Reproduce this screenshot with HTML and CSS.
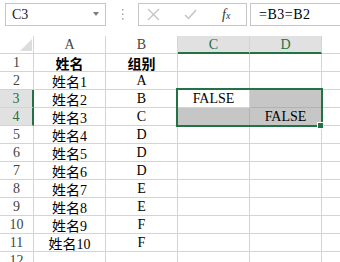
FILE: index.html
```html
<!DOCTYPE html>
<html lang="zh-CN">
<head>
  <meta charset="UTF-8">
  <title>Sheet</title>
  <link rel="stylesheet" href="styles.css">
</head>
<body>
  <div class="formula-bar">
    <div class="name-box"><span>C3</span><span class="caret"></span></div>
    <div class="grip">
      <svg width="3" height="11" viewBox="0 0 3 11"><rect x="1" y="0" width="1.5" height="1.5" fill="#a8a8a8"/><rect x="1" y="4.5" width="1.5" height="1.5" fill="#a8a8a8"/><rect x="1" y="9" width="1.5" height="1.5" fill="#a8a8a8"/></svg>
    </div>
    <div class="fx-tools">
      <svg class="ico-x" width="13" height="13" viewBox="0 0 13 13"><path d="M1 1 L12 12 M12 1 L1 12" stroke="#c4c4c4" stroke-width="1.3" fill="none"/></svg>
      <svg class="ico-ok" width="13" height="11" viewBox="0 0 13 11"><path d="M1 6 L4.5 9.5 L12 1" stroke="#c4c4c4" stroke-width="1.5" fill="none"/></svg>
      <span class="fx">f<small>x</small></span>
    </div>
    <div class="formula">=B3=B2</div>
  </div>

  <div class="sheet">
    <div class="c corner"><span class="tri"></span></div>
    <div class="c h">A</div>
    <div class="c h">B</div>
    <div class="c h sel">C</div>
    <div class="c h sel">D</div>
    <div class="c h"></div>

    <div class="c r">1</div><div class="c b">姓名</div><div class="c b">组别</div><div class="c"></div><div class="c"></div><div class="c"></div>
    <div class="c r">2</div><div class="c">姓名1</div><div class="c">A</div><div class="c"></div><div class="c"></div><div class="c"></div>
    <div class="c r sel">3</div><div class="c">姓名2</div><div class="c">B</div><div class="c">FALSE</div><div class="c fill"></div><div class="c"></div>
    <div class="c r sel">4</div><div class="c">姓名3</div><div class="c">C</div><div class="c fill"></div><div class="c fill">FALSE</div><div class="c"></div>
    <div class="c r">5</div><div class="c">姓名4</div><div class="c">D</div><div class="c"></div><div class="c"></div><div class="c"></div>
    <div class="c r">6</div><div class="c">姓名5</div><div class="c">D</div><div class="c"></div><div class="c"></div><div class="c"></div>
    <div class="c r">7</div><div class="c">姓名6</div><div class="c">D</div><div class="c"></div><div class="c"></div><div class="c"></div>
    <div class="c r">8</div><div class="c">姓名7</div><div class="c">E</div><div class="c"></div><div class="c"></div><div class="c"></div>
    <div class="c r">9</div><div class="c">姓名8</div><div class="c">E</div><div class="c"></div><div class="c"></div><div class="c"></div>
    <div class="c r">10</div><div class="c">姓名9</div><div class="c">F</div><div class="c"></div><div class="c"></div><div class="c"></div>
    <div class="c r">11</div><div class="c">姓名10</div><div class="c">F</div><div class="c"></div><div class="c"></div><div class="c"></div>
    <div class="c r">12</div><div class="c"></div><div class="c"></div><div class="c"></div><div class="c"></div><div class="c"></div>

    <!-- selection C3:D4 -->
    <div class="selection"></div>
    <div class="handle"></div>
  </div>
</body>
</html>
```

FILE: styles.css
```css
body {
  margin: 0;
  width: 340px;
  height: 262px;
  overflow: hidden;
  background: #fff;
  font-family: "Liberation Serif", "Noto Sans CJK SC", serif;
  font-size: 14px;
  color: #000;
}
.formula-bar {
  display: flex;
  height: 23px;
  padding: 3px 0 0 5px;
}
.name-box {
  width: 101px;
  box-sizing: border-box;
  border: 1px solid #c6c6c6;
  display: flex;
  align-items: center;
  justify-content: space-between;
  padding: 0 6px 0 6px;
  color: #222;
}
.caret {
  width: 0;
  height: 0;
  border-left: 3px solid transparent;
  border-right: 3px solid transparent;
  border-top: 4px solid #7a7a7a;
  margin-bottom: 2px;
}
.grip {
  width: 32px;
  display: flex;
  align-items: center;
  justify-content: center;
}
.fx-tools {
  width: 109px;
  box-sizing: border-box;
  border: 1px solid #c6c6c6;
  display: flex;
  align-items: center;
  padding-left: 8px;
}
.ico-x {
  margin-right: 24px;
}
.ico-ok {
  margin-right: 25px;
}
.fx {
  font-family: "Liberation Serif", serif;
  font-style: italic;
  font-size: 14px;
  color: #333;
}
.fx small {
  font-size: 10px;
}
.formula {
  flex: 1;
  margin-left: 3px;
  margin-right: -2px;
  border: 1px solid #c6c6c6;
  display: flex;
  align-items: center;
  padding-left: 8px;
  letter-spacing: 0.5px;
}
.sheet {
  position: relative;
  margin-top: 10px;
  display: grid;
  grid-template-columns: 34px 72px 72px 72px 72px 72px;
  grid-auto-rows: 18px;
}
.c {
  box-sizing: border-box;
  border-right: 1px solid #d4d4d4;
  border-bottom: 1px solid #d4d4d4;
  display: flex;
  align-items: center;
  justify-content: center;
  padding-top: 1px;
  white-space: nowrap;
}
.corner {
  position: relative;
}
.tri {
  position: absolute;
  right: 1px;
  bottom: 2px;
  width: 0;
  height: 0;
  border-left: 12px solid transparent;
  border-bottom: 12px solid #dcdcdc;
}
.h, .r {
  color: #444;
}
.h.sel {
  background: #e1e1e1;
  color: #217346;
  border-bottom: 2px solid #217346;
}
.r.sel {
  background: #e1e1e1;
  color: #217346;
  border-right: 2px solid #217346;
}
.b {
  font-weight: bold;
}
.fill {
  background: #c6c6c6;
  border-color: #b2b2b2;
}
.selection {
  position: absolute;
  left: 176px;
  top: 52px;
  width: 147px;
  height: 39px;
  box-sizing: border-box;
  border: 2px solid #217346;
}
.handle {
  position: absolute;
  left: 317px;
  top: 86px;
  width: 5px;
  height: 5px;
  background: #217346;
  border: 1px solid #fff;
}
```
